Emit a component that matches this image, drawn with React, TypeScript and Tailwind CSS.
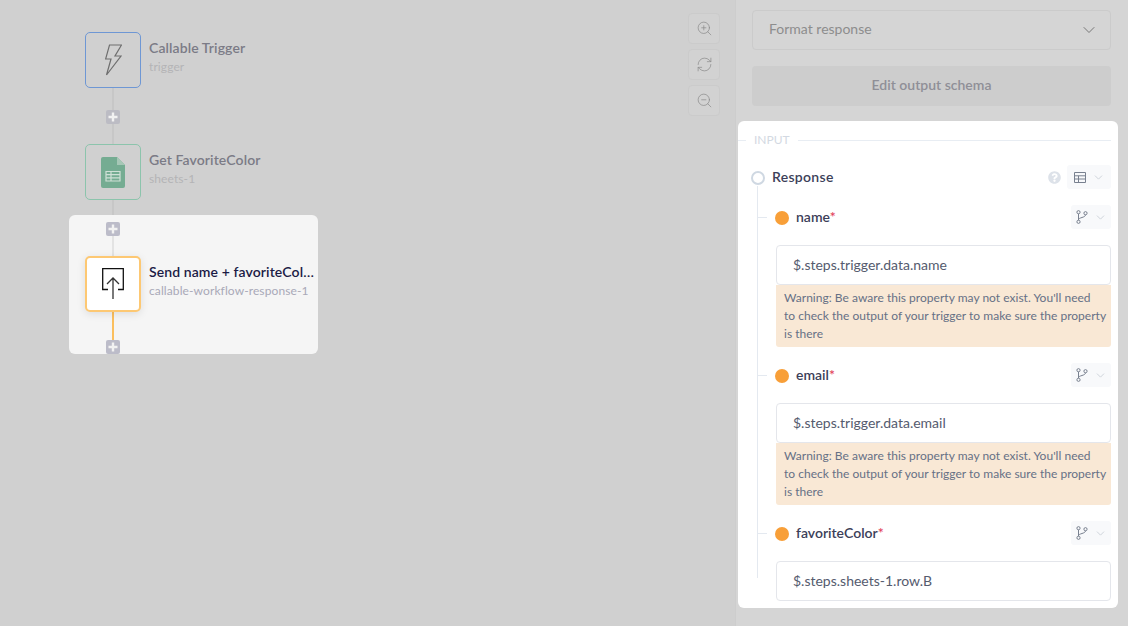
import { ChevronDown, RefreshCw, ZoomIn, ZoomOut } from "lucide-react";
import { FaQuestionCircle } from "react-icons/fa";

const font = "font-['Lato','Noto_Sans',sans-serif]";

function Plus({ className }: { className: string }) {
  return (
    <div className={`absolute left-[106px] flex h-[14px] w-[14px] items-center justify-center rounded-[2px] ${className}`}>
      <svg width="10" height="10" viewBox="0 0 10 10">
        <path d="M5 0.5v9M0.5 5h9" stroke="#f2f2f2" strokeWidth="2.4" />
      </svg>
    </div>
  );
}

function BranchButton() {
  return (
    <div className="flex h-6 w-10 items-center justify-center gap-[6px] rounded-[3px] bg-[#f8f9fb]">
      <svg width="12" height="14" viewBox="0 0 12 14" fill="none" stroke="#78808f" strokeWidth="1">
        <circle cx="2.5" cy="2.2" r="1.6" />
        <circle cx="2.5" cy="11.8" r="1.6" />
        <circle cx="9.5" cy="3.2" r="1.6" />
        <path d="M2.5 3.8v6.4M9.5 4.8c0 3-7 2.5-7 5" />
      </svg>
      <ChevronDown size={13} strokeWidth={1.6} className="text-[#c9ced6]" />
    </div>
  );
}

function Warning() {
  return (
    <div className="rounded-b-[3px] bg-[#f9e8d5] pt-[4px] pr-0 pb-[4px] pl-2 text-[12px] leading-[18px] tracking-[0.02px] text-[#667085]">
      Warning: Be aware this property may not exist. You'll need
      <br />
      to check the output of your trigger to make sure the property
      <br />
      is there
    </div>
  );
}

function Field({ label, value, warn }: { label: string; value: string; warn?: boolean }) {
  return (
    <div className="relative">
      <div className="absolute top-[12px] left-[-19px] h-px w-[10px] bg-[#e4e9f0]" />
      <div className="flex h-6 items-center justify-between">
        <div className="-ml-px flex items-center gap-[7px]">
          <div className="mt-[2px] h-[14px] w-[14px] rounded-full bg-[#f89f38]" />
          <div className="mb-[2px] text-[14px] font-semibold text-[#3c4059]">
            {label}
            <span className="text-[#e2445c]">*</span>
          </div>
        </div>
        <BranchButton />
      </div>
      <div className="mt-4 flex h-10 items-center rounded-[4px] border border-[#e4e6eb] pb-[2px] pl-4 text-[14px] text-[#555b6e]">
        {value}
      </div>
      {warn && <Warning />}
    </div>
  );
}

export default function App() {
  return (
    <div className={`flex h-[626px] w-[1128px] overflow-hidden bg-[#d0d0d0] ${font}`}>
      {/* workflow canvas */}
      <div className="relative w-[735px] shrink-0">
        <div className="absolute top-[88px] left-[112px] h-[56px] w-[2px] bg-[#c7c7c7]" />
        <div className="absolute top-[200px] left-[112px] h-[15px] w-[2px] bg-[#c7c7c7]" />
        <Plus className="top-[110px] bg-[#bcbcc4]" />

        <div className="absolute top-[32px] left-[85px] flex h-14 w-14 items-center justify-center rounded-[5px] border border-[#6e97d4]">
          <svg width="17" height="32" viewBox="0 0 17 32" fill="none" stroke="#6e6e6e" strokeWidth="1.2" strokeLinejoin="miter">
            <path d="M4.500 1H16.500L10 12h6L1.500 31l4.500-16H0.600z" />
          </svg>
        </div>
        <div className="absolute top-[39px] left-[149px] text-[14px] leading-[18px] font-semibold tracking-[0.1px] text-[#7b7b86]">Callable Trigger</div>
        <div className="absolute top-[59px] left-[149px] text-[12px] leading-4 tracking-[0.1px] text-[#b4b4b6]">trigger</div>

        <div className="absolute top-[144px] left-[85px] flex h-14 w-14 items-center justify-center rounded-[5px] border border-[#8cc4ac]">
          <svg width="24" height="31" viewBox="0 0 24 31">
            <path d="M2 0h14l8 8v21a2 2 0 0 1-2 2H2a2 2 0 0 1-2-2V2a2 2 0 0 1 2-2z" fill="#75ac92" />
            <path d="M16 0l8 8h-8z" fill="#a6c7b6" />
            <path d="M5 14.5h14v9.500H5zM5 17.700h14M5 20.800h14M10 14.500v9.500" fill="none" stroke="#cfe0d6" strokeWidth="1.200" />
          </svg>
        </div>
        <div className="absolute top-[151px] left-[149px] text-[14px] leading-[18px] font-semibold tracking-[0.1px] text-[#7b7b86]">Get FavoriteColor</div>
        <div className="absolute top-[171px] left-[149px] text-[12px] leading-4 tracking-[0.1px] text-[#b4b4b6]">sheets-1</div>

        {/* selected step */}
        <div className="absolute top-[215px] left-[69px] h-[139px] w-[249px] rounded-md bg-[#f5f5f5]" />
        <div className="absolute top-[236px] left-[112px] h-[20px] w-[2px] bg-[#e3e3e3]" />
        <div className="absolute top-[312px] left-[112px] h-[28px] w-[2px] bg-[#fbbf5e]" />
        <Plus className="top-[222px] bg-[#bcbcc9]" />
        <Plus className="top-[340px] bg-[#bcbcc9]" />
        <div className="absolute top-[256px] left-[85px] flex h-14 w-14 items-center justify-center rounded-[5px] border-2 border-[#fdc873] bg-white shadow-[0_2px_8px_rgba(0,0,0,0.1)]">
          <svg width="22" height="32" viewBox="0 0 22 32" fill="none">
            <path d="M6 21.500H0.700V0.700h20.600v20.800H16" stroke="#111" strokeWidth="1.300" />
            <path d="M11 31V10M5 16l6-6 6 6" stroke="#333" strokeWidth="1.300" />
          </svg>
        </div>
        <div className="absolute top-[263px] left-[149px] w-[168px] truncate text-[14px] leading-[18px] font-semibold tracking-[0.1px] text-[#1b1b45]">
          Send name + favoriteColor to caller
        </div>
        <div className="absolute top-[283px] left-[149px] text-[12px] leading-4 tracking-[0.1px] text-[#a9a9b8]">callable-workflow-response-1</div>

        {/* zoom controls */}
        <div className="absolute top-[13px] left-[688px] flex flex-col gap-[5px]">
          {[ZoomIn, RefreshCw, ZoomOut].map((Icon, i) => (
            <div key={i} className="flex h-[31px] w-[32px] items-center justify-center rounded-[4px] border border-[#cbcbcb] bg-[#d2d2d2]">
              <Icon size={17} strokeWidth={1} className="text-[#8a8a8a]" />
            </div>
          ))}
        </div>
      </div>

      {/* settings panel */}
      <div className="flex-1 border-l border-[#cdcdcd] bg-[#d5d5d5] pt-[10px] pr-[10px] pl-[2px]">
        <div className="ml-[14px] mr-[7px]">
          <div className="flex h-10 items-center justify-between rounded-[4px] border border-[#cbcbcb] pr-[11px] pl-4 text-[14px] text-[#8d8d8d]">
            <span className="mb-[3px]">Format response</span>
            <ChevronDown size={20} strokeWidth={1.2} className="text-[#777]" />
          </div>
          <div className="mt-4 flex h-10 items-center justify-center rounded-[4px] bg-[#cdcdcd] pb-[3px] text-[14px] font-semibold text-[#8f8f97]">
            Edit output schema
          </div>
        </div>

        {/* input card */}
        <div className="mt-[15px] h-[487px] rounded-md bg-white pt-[12px] pr-[7px]">
          <div className="flex h-[14px] items-center">
            <div className="h-px w-[8px] bg-[#e8edf3]" />
            <div className="mx-2 text-[12px] text-[#d3d9e2]">INPUT</div>
            <div className="h-px flex-1 bg-[#e8edf3]" />
          </div>

          <div className="mt-[14px] ml-[13px] flex h-8 items-center justify-between">
            <div className="flex items-center gap-[7px]">
              <div className="mt-[2px] h-[14px] w-[14px] rounded-full border-2 border-[#cfd8e2]" />
              <div className="mb-[2px] text-[14px] font-semibold tracking-[0.3px] text-[#3c4059]">Response</div>
            </div>
            <div className="flex items-center gap-[6px]">
              <FaQuestionCircle size={13} className="text-[#dde2e9]" />
              <div className="flex h-6 w-11 items-center justify-center gap-[6px] rounded-[3px] bg-[#f8f9fb] pl-[1px]">
                <svg width="12" height="11" viewBox="0 0 12 11" fill="none" stroke="#78808f" strokeWidth="1">
                  <path d="M0.500 0.500h11v10h-11zM0.500 3.800h11M0.500 7h11M4.500 3.800v6.700" />
                </svg>
                <ChevronDown size={13} strokeWidth={1.6} className="text-[#c9ced6]" />
              </div>
            </div>
          </div>

          <div className="relative mt-[12px] pl-[38px]">
            <div className="absolute top-[-19px] bottom-[23px] left-[19px] w-px bg-[#e4e9f0]" />
            <div className="flex flex-col gap-[16px]">
              <Field label="name" value="$.steps.trigger.data.name" warn />
              <Field label="email" value="$.steps.trigger.data.email" warn />
              <Field label="favoriteColor" value="$.steps.sheets-1.row.B" />
            </div>
          </div>
        </div>
      </div>
    </div>
  );
}
